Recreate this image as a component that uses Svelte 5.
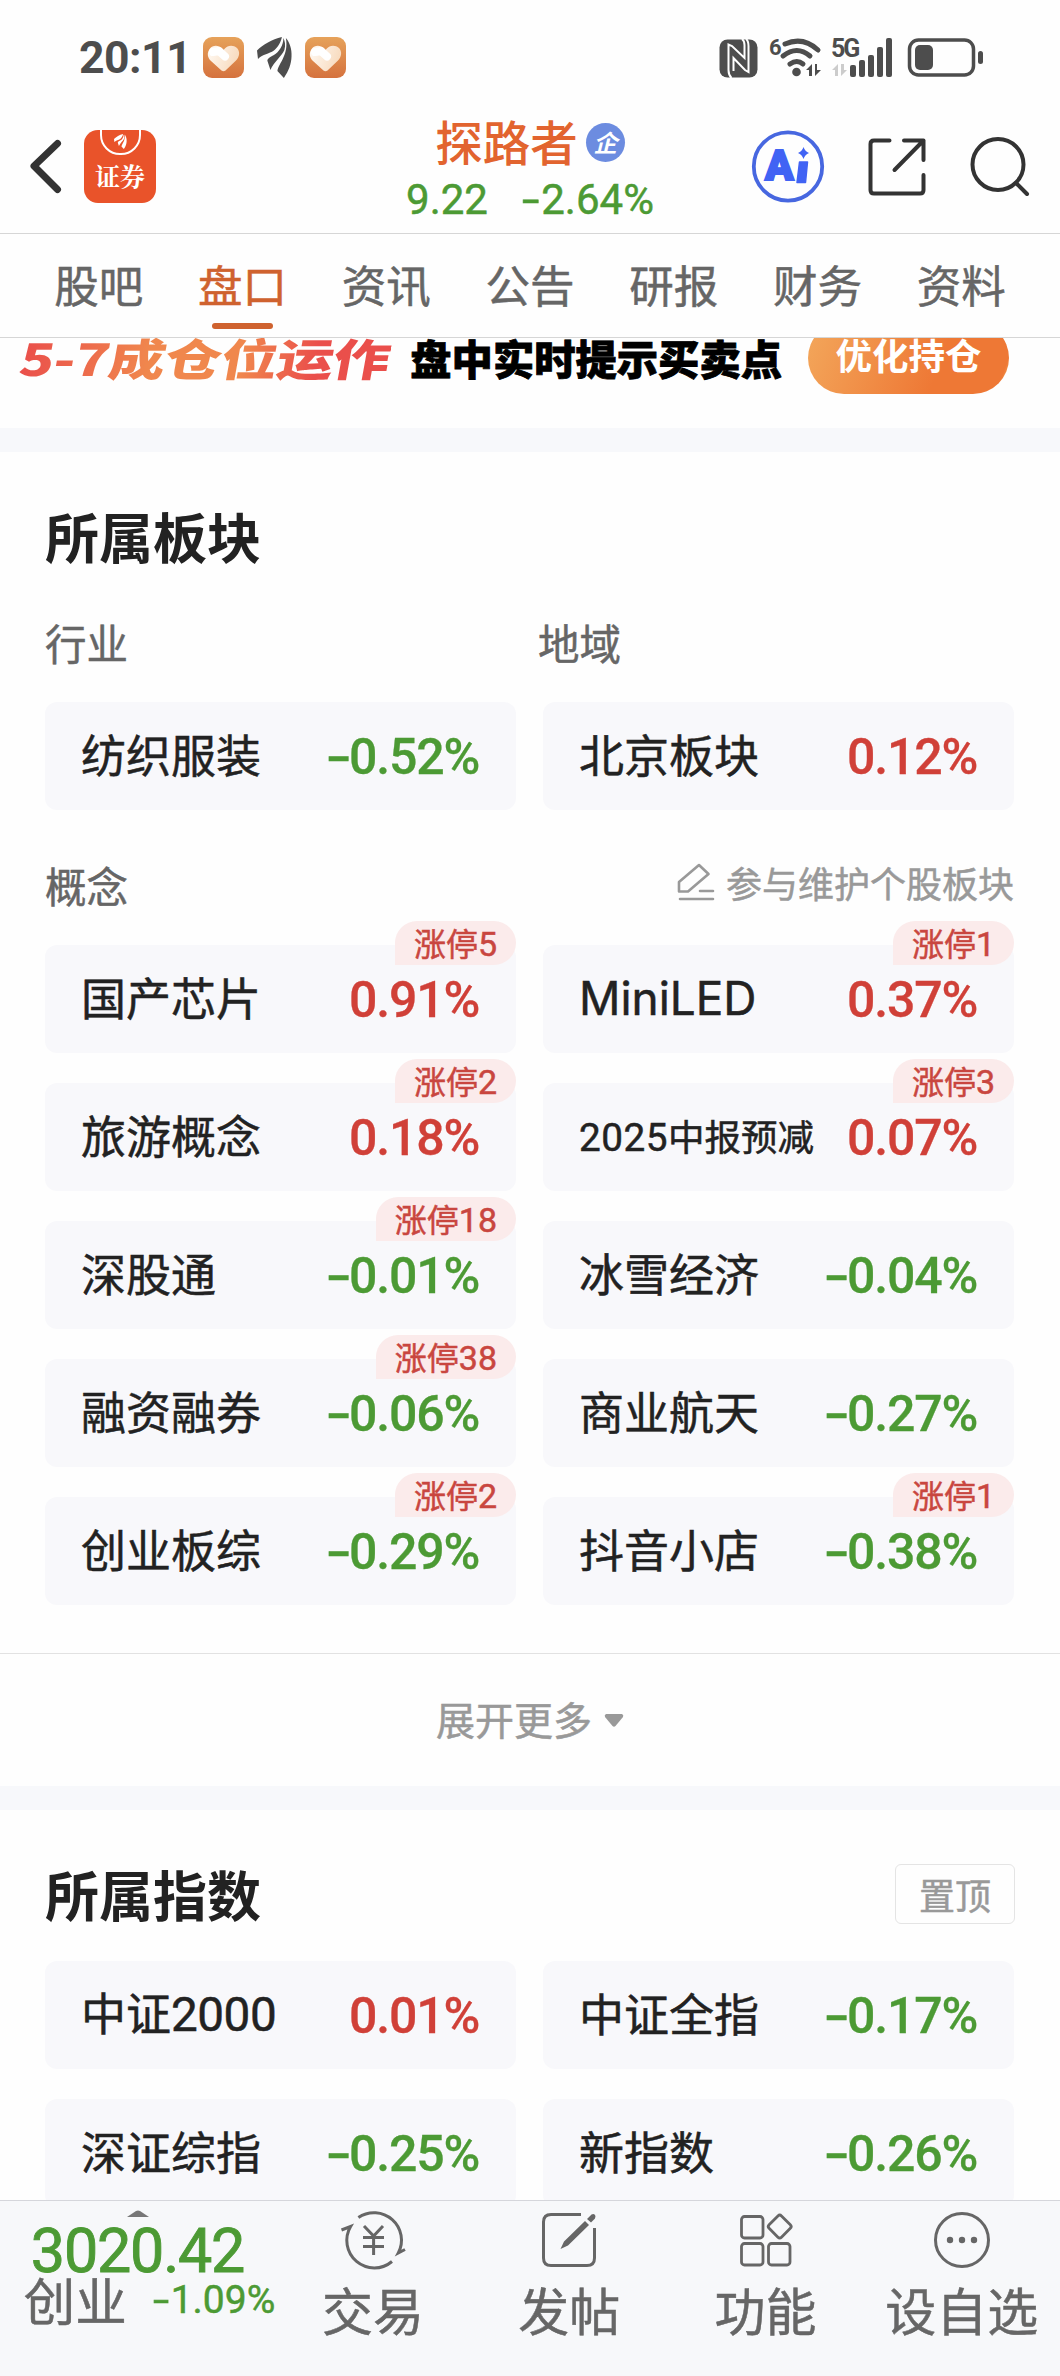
<script>
  const tabs = ["股吧", "盘口", "资讯", "公告", "研报", "财务", "资料"];
  let activeTab = $state("盘口");

  const industry = { name: "纺织服装", change: -0.52 };
  const region = { name: "北京板块", change: 0.12 };

  const concepts = [
    { name: "国产芯片", change: 0.91, limitUp: 5 },
    { name: "MiniLED", change: 0.37, limitUp: 1 },
    { name: "旅游概念", change: 0.18, limitUp: 2 },
    { name: "2025中报预减", change: 0.07, limitUp: 3 },
    { name: "深股通", change: -0.01, limitUp: 18 },
    { name: "冰雪经济", change: -0.04 },
    { name: "融资融券", change: -0.06, limitUp: 38 },
    { name: "商业航天", change: -0.27 },
    { name: "创业板综", change: -0.29, limitUp: 2 },
    { name: "抖音小店", change: -0.38, limitUp: 1 },
  ];

  const indexes = [
    { name: "中证2000", change: 0.01 },
    { name: "中证全指", change: -0.17 },
    { name: "深证综指", change: -0.25 },
    { name: "新指数", change: -0.26 },
  ];

  // latin runs are set in a different face and size than the chinese ones
  const splitName = (name) => name.split(/([A-Za-z]+|\d+)/).filter(Boolean);
</script>

{#snippet percent(value)}
  {#if value < 0}<span class="sign">-</span>{/if}{Math.abs(value).toFixed(2)}%
{/snippet}

{#snippet card(item)}
  <div class="card">
    <span class="name" class:small={item.name.length > 7}>
      {#each splitName(item.name) as part}
        <span class:digits={/\d/.test(part)} class:latin={/[A-Za-z]/.test(part)}>{part}</span>
      {/each}
    </span>
    <span class="change" class:down={item.change < 0}>{@render percent(item.change)}</span>
    {#if item.limitUp}
      <span class="limit">涨停<b>{item.limitUp}</b></span>
    {/if}
  </div>
{/snippet}

{#snippet heart()}
  <svg width="41" height="41" viewBox="0 0 41 41">
    <defs>
      <linearGradient id="heart-bg" x1="0" y1="0" x2="0" y2="1">
        <stop offset="0" stop-color="#e6a25a" />
        <stop offset="1" stop-color="#d5723e" />
      </linearGradient>
      <linearGradient id="heart-fg" x1="0" y1="0" x2="1" y2="0.3">
        <stop offset="0" stop-color="#fffaf4" />
        <stop offset="1" stop-color="#f8dcc0" />
      </linearGradient>
    </defs>
    <rect width="41" height="41" rx="9" fill="url(#heart-bg)" />
    <path d="M20.500 13C17 8 10 7.500 7 11.500C3.500 16 4.500 20.500 8 24L18.500 33.500Q20.500 35 22.500 33.500L33 23.500C37 19.500 37 14 34 11C30 7.500 24 8 20.500 13Z" fill="url(#heart-fg)" />
    <path d="M10 15L16 14L22 19.500" fill="none" stroke="#fff" stroke-width="8" stroke-linecap="round" stroke-linejoin="round" />
  </svg>
{/snippet}

{#snippet feather(size)}
  <svg width={size * 0.85} height={size} viewBox="0 0 35 41" fill="currentColor">
    <path d="M25 0C15 2 6 8 0 13.500L1 22C6 17 12 17 17 13.500C21 10.500 24 5 25 0Z" />
    <path d="M26.500 1C26.500 9 22 15 17 18C13 20 10 22 10.500 24L13.500 33C17 25 25 19 27.500 13C29 8 28 4 26.500 1Z" />
    <path d="M29 1C37 10 37 28 27 41L20.500 34C22 26 32 18 29 1Z" />
  </svg>
{/snippet}

<div class="page">
  <div class="status">
    <div class="status-left">
      <span class="time">20:11</span>
      {@render heart()}
      {@render feather(41)}
      {@render heart()}
    </div>
    <svg width="266" height="42" viewBox="0 0 266 42" fill="#4d4d4d">
      <rect x="0.500" y="3.500" width="38" height="38" rx="8" />
      <path d="M12.500 42Q9.500 39 9.500 34V8.500L13 10L25.500 22V9Q25.500 5 23 3M27 3Q29.500 5 29.500 10V36L26 34L14.500 22V35" fill="none" stroke="#fff" stroke-width="2" />
      <text x="50" y="18.500" class="tiny">6</text>
      <g fill="none" stroke="#4d4d4d" stroke-width="5" stroke-linecap="round">
        <path d="M66 8Q84 0 99 14" />
        <path d="M64 20Q78 9 91 20" />
        <path d="M71 28Q78 23 84 28" />
      </g>
      <circle cx="77.500" cy="36" r="4.300" />
      <path d="M87 34L93 28V40H90V34ZM96 28V40L102 34H98V28Z" />
      <text x="112" y="21" class="tiny five">5G</text>
      <path d="M113 34L119 28V40H116V34ZM122 28V40L128 34H125V28Z" fill="#ccc" />
      <rect x="131" y="29" width="6" height="12" rx="2" />
      <rect x="140" y="24" width="6" height="17" rx="2" />
      <rect x="149" y="19" width="6" height="22" rx="2" />
      <rect x="158" y="11" width="6" height="30" rx="2" />
      <rect x="167" y="2" width="6" height="39" rx="2" />
      <rect x="190.500" y="4" width="64" height="35" rx="9" fill="none" stroke="#4d4d4d" stroke-width="3.500" />
      <rect x="196" y="9" width="18" height="25" rx="5" />
      <rect x="259" y="15" width="5" height="13" rx="2.500" />
    </svg>
  </div>

  <header>
    <div class="left">
      <svg width="32" height="54" viewBox="0 0 32 54" fill="none" stroke="#333" stroke-width="7" stroke-linecap="round" stroke-linejoin="round">
        <path d="M27.500 3.500L4 26L27.500 49.500" />
      </svg>
      <div class="logo">
        <div class="pocket">{@render feather(15)}</div>
        <span>证券</span>
      </div>
    </div>
    <div class="stock">
      <div class="stock-name">探路者<i>企</i></div>
      <div class="quote"><span>9.22</span><span>{@render percent(-2.64)}</span></div>
    </div>
    <div class="actions">
      <svg width="72" height="73" viewBox="0 0 72 73">
        <circle cx="36" cy="36.500" r="34.200" fill="none" stroke="#4767e0" stroke-width="3.800" />
        <text x="13" y="49.500" class="ai">A</text>
        <path d="M47.500 32H55.500L53.500 52.500H45Z" fill="#4163f4" stroke="#4163f4" stroke-width="1.500" stroke-linejoin="round" />
        <path d="M51.500 17Q53 21.500 57 23Q53 24.500 51.500 29Q50 24.500 46 23Q50 21.500 51.500 17Z" fill="#4163f4" />
      </svg>
      <svg width="58" height="58" viewBox="0 0 58 58" fill="none" stroke="#333" stroke-width="4" stroke-linecap="round" stroke-linejoin="round">
        <path d="M21.500 2.500H6Q2.500 2.500 2.500 6V52Q2.500 55.500 6 55.500H52Q55.500 55.500 55.500 52V37M36 2.500H55.500V22M55.500 2.500L26.500 32" />
      </svg>
      <svg width="60" height="60" viewBox="0 0 60 60" fill="none" stroke="#333" stroke-width="4" stroke-linecap="round">
        <circle cx="28" cy="27.500" r="25.500" />
        <path d="M46 46L57 57" />
      </svg>
    </div>
  </header>

  <nav>
    {#each tabs as tab}
      <button class:active={tab === activeTab} onclick={() => (activeTab = tab)}>{tab}</button>
    {/each}
  </nav>

  <main>
    <div class="banner">
      <span class="slogan">5-7成仓位运作</span>
      <span class="tip">盘中实时提示买卖点</span>
      <span class="cta">优化持仓</span>
    </div>

    <section class="sectors">
      <h2>所属板块</h2>
      <div class="labels">
        <span>行业</span>
        <span>地域</span>
      </div>
      <div class="grid">
        {@render card(industry)}
        {@render card(region)}
      </div>
      <div class="labels concept">
        <span>概念</span>
        <a href="#edit">
          <svg width="38" height="38" viewBox="0 0 38 38" fill="none" stroke="#999" stroke-width="2.600" stroke-linecap="round" stroke-linejoin="round">
            <path d="M2 19L22 2L31.500 11L11 28.500H2ZM23 28H36M3 36H36" />
          </svg>
          参与维护个股板块
        </a>
      </div>
      <div class="grid">
        {#each concepts as item}
          {@render card(item)}
        {/each}
      </div>
    </section>

    <div class="more">
      <span>展开更多</span>
      <svg width="20" height="13" viewBox="0 0 20 13" fill="#999">
        <path d="M2 0H18Q20 1 19 3L11.500 12Q10 13.500 8.500 12L1 3Q0 1 2 0Z" />
      </svg>
    </div>

    <section class="indexes">
      <div class="heading">
        <h2>所属指数</h2>
        <button class="pin">置顶</button>
      </div>
      <div class="grid">
        {#each indexes as item}
          {@render card(item)}
        {/each}
      </div>
    </section>
  </main>

  <footer>
    <div class="market">
      <svg width="22" height="7" viewBox="0 0 22 7" fill="#777">
        <path d="M0 7L9 1Q11 0 13 1L22 7Z" />
      </svg>
      <div class="points">3020.42</div>
      <div class="board"><span>创业</span><em>{@render percent(-1.09)}</em></div>
    </div>
    <div class="tool">
      <svg width="66" height="60" viewBox="0 0 66 60" fill="none" stroke="#666" stroke-width="3">
        <path d="M18.400 7.500A27.500 27.500 0 0 1 58.300 43L65 39.500M52 51.500A27.500 27.500 0 0 1 10.600 16.500L1.500 20" />
        <path d="M24 16L33.600 26L43 16M23 27.500H44M23 36.500H44M33.600 26V45" />
      </svg>
      <span>交易</span>
    </div>
    <div class="tool">
      <svg width="54" height="60" viewBox="0 -3 54 60" fill="none" stroke="#666" stroke-width="3">
        <path d="M39 1.500H9Q1.500 1.500 1.500 9V45Q1.500 52.500 9 52.500H45Q52.500 52.500 52.500 45V15" />
        <path d="M18.500 36L22 28.500L43 8L47 12L26 32.500ZM45 6L49.500 1.500Q52.500 0 53.500 3L53 5.500L49 9.500Z" fill="#666" stroke="none" />
      </svg>
      <span>发帖</span>
    </div>
    <div class="tool">
      <svg width="52" height="60" viewBox="0 -4 52 60" fill="none" stroke="#666" stroke-width="2.800">
        <rect x="1.500" y="2.500" width="21.500" height="21.500" rx="3" />
        <rect x="1.500" y="29.500" width="21.500" height="21.500" rx="3" />
        <rect x="28.500" y="29.500" width="21.500" height="21.500" rx="3" />
        <rect x="31" y="3.800" width="17.500" height="17.500" rx="2.500" transform="rotate(45 39.750 12.500)" />
      </svg>
      <span>功能</span>
    </div>
    <div class="tool">
      <svg width="58" height="60" viewBox="0 -1 58 60" fill="none" stroke="#666" stroke-width="3">
        <circle cx="29" cy="29" r="26.500" />
        <g fill="#666" stroke="none">
          <circle cx="17" cy="29" r="3.200" />
          <circle cx="29" cy="29" r="3.200" />
          <circle cx="41" cy="29" r="3.200" />
        </g>
      </svg>
      <span>设自选</span>
    </div>
  </footer>
</div>

<style>
  :global(body) {
    background: #fdfdfd;
  }

  .page {
    --red: #d04038;
    --green: #4c9a34;
    --cjk: "Noto Sans CJK SC", sans-serif;
    --num: Roboto, sans-serif;
    display: flex;
    flex-direction: column;
    height: 2376px;
    overflow: hidden;
    background: #fefefe;
    color: #222;
    font-family: var(--cjk);
    -webkit-text-stroke: 0.5px currentColor;
  }

  svg {
    display: block;
    flex: none;
    overflow: visible;
    -webkit-text-stroke: 0;
  }

  button {
    border: 0;
    background: none;
    padding: 0;
    font: inherit;
    color: inherit;
  }

  h2 {
    margin: 0;
    font-size: 54px;
    line-height: 60px;
    font-weight: 600;
    -webkit-text-stroke: 0;
  }

  .status {
    display: flex;
    justify-content: space-between;
    height: 44px;
    padding: 36px 75px 0 79px;
  }

  .status-left {
    display: flex;
    align-items: center;
    gap: 13px;
    height: 43px;
    color: #4d4d4d;
  }

  .time {
    width: 111px;
    font: 700 44.500px/44px var(--num);
    letter-spacing: -0.500px;
    -webkit-text-stroke: 0;
  }

  .tiny {
    font: 700 22px/1 var(--num);
  }

  .five {
    font-size: 25px;
    letter-spacing: -2px;
  }

  header {
    display: grid;
    grid-template-columns: 1fr auto 1fr;
    height: 153px;
    padding: 0 30px 0 30px;
    border-bottom: 1px solid #d6d6d6;
  }

  .left {
    display: flex;
    align-items: center;
    gap: 22px;
    height: 73px;
    padding-top: 50px;
  }

  .logo {
    display: flex;
    flex-direction: column;
    align-items: center;
    width: 72px;
    height: 73px;
    overflow: hidden;
    border-radius: 14px;
    background: #e9532a;
    color: #fff;
    font: 700 25px/30px "Noto Serif CJK SC", var(--cjk);
    -webkit-text-stroke: 0;
  }

  .pocket {
    display: flex;
    flex: none;
    justify-content: center;
    align-items: flex-end;
    width: 41px;
    height: 40px;
    margin: -15px 0 5px;
    padding-bottom: 4px;
    box-sizing: border-box;
    border: 2px solid #fff;
    border-radius: 0 0 20px 20px;
  }

  .stock {
    display: flex;
    flex-direction: column;
    align-items: center;
    padding-top: 31px;
  }

  .stock-name {
    display: flex;
    align-items: center;
    gap: 8px;
    font-size: 47.500px;
    font-weight: 500;
    line-height: 60px;
    color: #e2642f;
    -webkit-text-stroke: 0;
  }

  .stock-name i {
    width: 39px;
    height: 39px;
    margin-top: 3px;
    border-radius: 50%;
    background: #6c8ce0;
    color: #fff;
    font-size: 24px;
    line-height: 37px;
    text-align: center;
    font-weight: 700;
  }

  .quote {
    display: flex;
    gap: 34px;
    margin-top: 6px;
    font: 400 42px/46px var(--num);
    color: var(--green);
  }

  .sign {
    display: inline-block;
    width: 0.460em;
    transform: scaleX(1.500);
    transform-origin: 0 50%;
  }

  .actions {
    display: flex;
    align-items: center;
    justify-content: flex-end;
    gap: 44px;
    height: 73px;
    padding-top: 50px;
  }

  .ai {
    font: 900 42px Roboto, sans-serif;
    fill: #4163f4;
    stroke: #4163f4;
    stroke-width: 2px;
  }

  nav {
    display: flex;
    height: 103px;
    padding: 0 27px;
    border-bottom: 1px solid #d6d6d6;
  }

  nav button {
    flex: 1;
    display: flex;
    flex-direction: column;
    align-items: center;
    padding-top: 20px;
    font-size: 44.500px;
    line-height: 60px;
    color: #666;
  }

  nav .active {
    color: #cf622f;
  }

  .active::after {
    content: "";
    width: 61px;
    height: 6px;
    margin-top: 9px;
    border-radius: 3px;
    background: #cf622f;
  }

  main {
    flex: 1;
    min-height: 0;
    overflow: hidden;
  }

  .banner {
    display: flex;
    height: 90px;
    padding-left: 16px;
    border-bottom: 24px solid #f7f8fb;
    font-weight: 900;
    white-space: nowrap;
    -webkit-text-stroke: 0;
  }

  .slogan {
    width: max-content;
    font-size: 44px;
    line-height: 38px;
    letter-spacing: -0.500px;
    transform: scaleX(1.290) skewX(-8deg);
    transform-origin: 0 50%;
    background: linear-gradient(90deg, #ea4f4b, #f0874d 35%, #f0874d 60%, #ea4f4b 80%);
    background-clip: text;
    color: transparent;
  }

  .tip {
    margin-left: auto;
    font-size: 41.300px;
    line-height: 39px;
    color: #000;
    -webkit-text-stroke: 0.800px #000;
  }

  .cta {
    width: 201px;
    height: 72px;
    margin: -16px 51px 0 26px;
    border-radius: 36px;
    background: linear-gradient(110deg, #f3a75b, #ee7835 65%, #ee7835 94%, #f8cf7c);
    color: #fff;
    font-size: 36.500px;
    font-weight: 700;
    line-height: 66px;
    text-align: center;
  }

  .sectors {
    padding: 54px 46px 48px 45px;
    border-bottom: 1px solid #e2e2e2;
  }

  .labels {
    display: grid;
    grid-template-columns: 493px 1fr;
    margin: 46px 0 30px;
    font-size: 41.500px;
    line-height: 60px;
    color: #666;
  }

  .concept {
    display: flex;
    justify-content: space-between;
    margin: 45px 0 30px;
  }

  .concept a {
    display: flex;
    align-items: center;
    gap: 11px;
    margin-top: -6px;
    color: #999;
    font-size: 36px;
    text-decoration: none;
  }

  .grid {
    display: grid;
    grid-template-columns: 1fr 1fr;
    gap: 30px 27px;
  }

  .card {
    position: relative;
    display: flex;
    align-items: center;
    justify-content: space-between;
    height: 108px;
    padding: 0 37px 0 36px;
    box-sizing: border-box;
    border-radius: 12px;
    background: #f8f8fb;
  }

  .name {
    display: flex;
    align-items: baseline;
    margin-top: -4px;
    font-size: 45px;
    line-height: 60px;
    white-space: nowrap;
  }

  .small {
    margin-top: -1px;
    font-size: 36.500px;
  }

  .digits {
    font-family: var(--num);
    font-size: 1.060em;
    letter-spacing: -0.500px;
  }

  .small .digits {
    letter-spacing: 0.500px;
  }

  .latin {
    padding-top: 4px;
    font-family: Inter, sans-serif;
    font-size: 1.020em;
  }

  .change {
    margin-top: 2px;
    font: 500 50px/60px var(--num);
    letter-spacing: -1.200px;
    color: var(--red);
    -webkit-text-stroke: 0.300px currentColor;
  }

  .change.down {
    color: var(--green);
  }

  .limit {
    position: absolute;
    top: -24px;
    right: 0;
    height: 44px;
    padding: 0 19px;
    border-radius: 22px 22px 22px 0;
    background: #fbebeb;
    color: #c9463f;
    font-size: 32px;
    line-height: 43px;
  }

  .limit b {
    font: 400 34px/1 var(--num);
  }

  .more {
    display: flex;
    align-items: center;
    justify-content: center;
    gap: 12px;
    height: 132px;
    border-bottom: 24px solid #f7f8fb;
    color: #999;
    font-size: 39px;
  }

  .more span {
    margin-top: -4px;
  }

  .indexes {
    padding: 54px 45px 0 45px;
  }

  .indexes .grid {
    margin-right: 1px;
  }

  .heading {
    display: flex;
    justify-content: space-between;
    height: 60px;
    margin-bottom: 37px;
  }

  .pin {
    width: 120px;
    height: 60px;
    border: 1px solid #e4e4e4;
    border-radius: 6px;
    color: #999;
    font-size: 36px;
    line-height: 54px;
  }

  footer {
    display: grid;
    grid-template-columns: 275px repeat(4, 1fr);
    height: 175px;
    border-top: 1px solid #d5d6db;
    background: #f7f8fa;
    color: #666;
  }

  .market {
    display: flex;
    flex-direction: column;
    align-items: center;
    padding-top: 9px;
  }

  .points {
    margin-top: 8px;
    font: 400 61px/52px var(--num);
    letter-spacing: -1.200px;
    color: var(--green);
    -webkit-text-stroke: 0.900px currentColor;
  }

  .board {
    display: flex;
    gap: 26px;
    padding-left: 24px;
    font-size: 51.500px;
    line-height: 44px;
    white-space: nowrap;
  }

  .board em {
    margin-top: 3px;
    font: 400 39px/40px var(--num);
    color: var(--green);
  }

  .tool {
    display: flex;
    flex-direction: column;
    align-items: center;
    gap: 9px;
    padding-top: 9px;
    font-size: 51px;
    line-height: 60px;
    white-space: nowrap;
  }
</style>
